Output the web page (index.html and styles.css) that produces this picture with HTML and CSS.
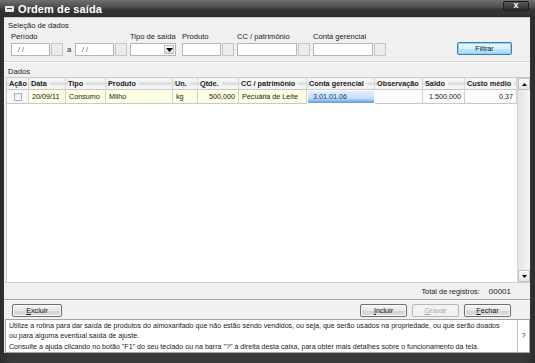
FILE: index.html
```html
<!DOCTYPE html>
<html lang="pt">
<head>
<meta charset="utf-8">
<title>Ordem de saída</title>
<link rel="stylesheet" href="styles.css">
</head>
<body>
<div class="win">
  <div class="titlebar">
    <span class="ticon"></span>
    <span class="ttext">Ordem de saída</span>
    <span class="close">x</span>
  </div>
  <div class="body">
    <div class="sec-title">Seleção de dados</div>
    <div class="filters">
      <div class="fg">
        <div class="lbl">Período</div>
        <div class="ctl">
          <div class="inp w39">/ /</div><div class="sbtn"></div>
          <span class="a">a</span>
          <div class="inp w39">/ /</div><div class="sbtn"></div>
        </div>
      </div>
      <div class="fg">
        <div class="lbl">Tipo de saída</div>
        <div class="ctl">
          <div class="inp sel"><span class="arrow"><svg width="7" height="4" viewBox="0 0 7 4"><path d="M0 0h7L3.5 4z" fill="#000"/></svg></span></div>
        </div>
      </div>
      <div class="fg">
        <div class="lbl">Produto</div>
        <div class="ctl"><div class="inp w39"></div><div class="sbtn"></div></div>
      </div>
      <div class="fg">
        <div class="lbl">CC / patrimônio</div>
        <div class="ctl"><div class="inp w60"></div><div class="sbtn"></div></div>
      </div>
      <div class="fg">
        <div class="lbl">Conta gerencial</div>
        <div class="ctl"><div class="inp w60"></div><div class="sbtn"></div></div>
      </div>
      <button class="btn filtrar">Filtrar</button>
    </div>
    <div class="sec-title dados">Dados</div>
    <div class="grid">
      <div class="table">
        <div class="th"><span>Ação</span></div>
        <div class="th"><span>Data</span></div>
        <div class="th"><span>Tipo</span></div>
        <div class="th"><span>Produto</span></div>
        <div class="th"><span>Un.</span></div>
        <div class="th"><span>Qtde.</span></div>
        <div class="th"><span>CC / patrimônio</span></div>
        <div class="th"><span>Conta gerencial</span></div>
        <div class="th"><span>Observação</span></div>
        <div class="th"><span>Saldo</span></div>
        <div class="th"><span>Custo médio</span></div>

        <div class="td act"><span class="chk"></span></div>
        <div class="td y">20/09/11</div>
        <div class="td y">Consumo</div>
        <div class="td y">Milho</div>
        <div class="td y">kg</div>
        <div class="td y r">500,000</div>
        <div class="td y">Pecuária de Leite</div>
        <div class="td sel-cell">3.01.01.06</div>
        <div class="td w"></div>
        <div class="td w r">1.500,000</div>
        <div class="td w r">0,37</div>
      </div>
      <div class="vscroll">
        <div class="sb-btn"><svg width="5" height="3" viewBox="0 0 5 3"><path d="M0 3h5L2.5 0z" fill="#000"/></svg></div>
        <div class="sb-track"></div>
        <div class="sb-btn"><svg width="5" height="3" viewBox="0 0 5 3"><path d="M0 0h5L2.5 3z" fill="#000"/></svg></div>
      </div>
    </div>
    <div class="status"><span>Total de registros:</span><span>00001</span></div>
    <div class="actions">
      <button class="btn"><u>E</u>xcluir</button>
      <div class="spacer"></div>
      <button class="btn"><u>I</u>ncluir</button>
      <button class="btn dis"><u>G</u>ravar</button>
      <button class="btn"><u>F</u>echar</button>
    </div>
    <div class="help">
      <div class="htext">
        <div>Utilize a rotina para dar saída de produtos do almoxarifado que não estão sendo vendidos, ou seja, que serão usados na propriedade, ou que serão doados</div>
        <div>ou para alguma eventual saída de ajuste.</div>
        <div>Consulte a ajuda clicando no botão "F1" do seu teclado ou na barra "?" à direita desta caixa, para obter mais detalhes sobre o funcionamento da tela.</div>
      </div>
      <div class="hq">?</div>
    </div>
  </div>
</div>
</body>
</html>
```

FILE: styles.css
```css
* { box-sizing: border-box; }
html, body { margin: 0; padding: 0; }
body {
  width: 535px;
  height: 363px;
  font-family: "Liberation Sans", Arial, sans-serif;
  font-size: 7.2px;
  color: #1a1a1a;
  overflow: hidden;
}
.win {
  width: 535px;
  height: 363px;
  background: linear-gradient(to right, #2c2c2c, #3a3a3a 2%, #3a3a3a 98%, #2c2c2c);
  display: flex;
  flex-direction: column;
  padding: 0 5px 10px 4px;
}
.titlebar {
  height: 17px;
  flex: none;
  margin: 0 -5px 0 -4px;
  padding: 0 6px 0 5px;
  background: linear-gradient(to bottom, #707070, #4a4a4a 45%, #353535 55%, #2e2e2e);
  display: flex;
  align-items: center;
  position: relative;
}
.ticon {
  width: 9px;
  height: 6px;
  background: #e8e8e8;
  border-radius: 1px;
  margin-right: 4px;
  position: relative;
}
.ticon::after {
  content: "";
  position: absolute;
  left: 2px; right: 2px; top: 2px; height: 1px;
  background: #444;
}
.ttext {
  color: #fff;
  font-weight: bold;
  font-size: 11px;
  letter-spacing: 0.1px;
}
.close {
  margin-left: auto;
  align-self: flex-start;
  margin-top: 1px;
  width: 26px;
  height: 10px;
  background: linear-gradient(to bottom, #5a5a5a, #2a2a2a);
  border: 1px solid #1c1c1c;
  border-radius: 2px;
  color: #fff;
  font-weight: bold;
  font-size: 9px;
  line-height: 7px;
  text-align: center;
}
.body {
  flex: 1;
  min-height: 0;
  background: #f0f0f0;
  border-top: 1px solid #c8c8c8;
  display: flex;
  flex-direction: column;
}
.body > * { flex: none; }
.sec-title {
  height: 14px;
  padding: 3px 0 0 4px;
  font-size: 7.6px;
  color: #222;
}
.filters {
  display: flex;
  align-items: flex-end;
  padding: 1px 18px 5px 7px;
  height: 30px;
  border-bottom: 1px solid #d4d4d4;
  box-shadow: 0 1px 0 #fff;
}
.fg { display: flex; flex-direction: column; margin-right: 3px; }
.fg:nth-child(2) { margin-right: 6px; }
.lbl { height: 11px; font-size: 7.6px; color: #222; }
.ctl { display: flex; align-items: center; height: 13px; }
.inp {
  height: 13px;
  background: #fff;
  border: 1px solid #b4b4b4;
  color: #444;
  font-size: 7px;
  line-height: 11px;
  padding-left: 6px;
}
.w39 { width: 39px; }
.w60 { width: 60px; }
.sbtn {
  width: 12px;
  height: 13px;
  margin-left: 1px;
  background: #ececec;
  border: 1px solid #c4c4c4;
}
.a { width: 12px; text-align: center; font-size: 7.6px; }
.sel {
  width: 46px;
  position: relative;
  padding: 0;
}
.arrow {
  position: absolute;
  right: 1px; top: 1px;
  width: 10px; height: 9px;
  background: linear-gradient(#fafafa, #dcdcdc);
  border: 1px solid #bdbdbd;
  display: flex; align-items: center; justify-content: center;
}
.btn {
  font-family: "Liberation Sans", Arial, sans-serif;
  font-size: 7.2px;
  color: #111;
  width: 47px;
  height: 13px;
  padding: 0;
  background: linear-gradient(to bottom, #f6f6f6, #e6e6e6 50%, #d4d4d4 51%, #dcdcdc);
  border: 1px solid #707070;
  border-radius: 2px;
  box-shadow: inset 0 0 0 1px #fafafa;
}
.btn u { text-decoration: underline; }
.btn.filtrar {
  width: 55px;
  margin-left: auto;
  margin-bottom: 1px;
  border-color: #3c7fb1;
  background: linear-gradient(to bottom, #eaf6fd, #d9f0fc 50%, #bee6fd 51%, #a7d9f5);
  box-shadow: inset 0 0 0 1px #8fd0f5;
}
.btn.dis { color: #a8a8a8; border-color: #b8b8b8; background: #f2f2f2; box-shadow: none; }
.dados { height: 13px; padding-top: 3px; margin-top: 2px; }
.grid {
  margin-left: 2px;
  height: 205px;
  background: #fff;
  border-top: 1px solid #c9c9c9;
  border-left: 1px solid #c9c9c9;
  display: flex;
}
.table {
  display: grid;
  grid-template-columns: 22px 37px 40px 67px 25px 41px 68px 68px 48px 42px 52px;
  grid-template-rows: 12px 14px;
  align-content: start;
}
.th {
  font-weight: bold;
  font-size: 7.3px;
  color: #222;
  background: linear-gradient(to bottom, #f4f4f4 0, #f4f4f4 30%, #d6dadd 50%, #f4f4f4 72%, #f4f4f4 100%);
  border-right: 1px solid #d8d8d8;
  border-bottom: 1px solid #c8c8c8;
  padding-left: 2px;
  line-height: 11px;
  white-space: nowrap;
  overflow: hidden;
}
.th span { background: #f4f4f4; padding-right: 3px; display: inline-block; }
.th:last-child { background: #f4f4f4; }
.td {
  border-right: 1px solid #cfcfcf;
  border-bottom: 1px solid #c8c8c8;
  padding: 0 3px;
  line-height: 13px;
  font-size: 7.2px;
  white-space: nowrap;
  overflow: hidden;
}
.td.y { background: #fefee3; }
.td.w { background: #fcfcfc; }
.td.r { text-align: right; }
.td.act { background: #f8f8f8; display: flex; align-items: center; justify-content: center; }
.chk {
  width: 8px; height: 8px;
  border: 1px solid #9fb4c8;
  background: linear-gradient(#e6ecf2, #fafbfc);
}
.td.sel-cell {
  background: linear-gradient(to bottom, #e2effc, #c6dff8 60%, #7fb3ea 85%, #5c9ce0);
  color: #14306e;
  border: 1px solid #fff;
  padding-left: 5px;
  line-height: 11px;
}
.vscroll {
  width: 13px;
  display: flex;
  flex-direction: column;
  border-left: 1px solid #d6d6d6;
  background: #ececec;
}
.sb-btn {
  height: 12px;
  background: linear-gradient(#fbfbfb, #e4e4e4);
  border: 1px solid #c2c2c2;
  display: flex; align-items: center; justify-content: center;
}
.sb-track { flex: 1; background: linear-gradient(to right, #e4e4e4, #f4f4f4); }
.status {
  height: 18px;
  border-top: 1px solid #cfcfcf;
  display: flex;
  justify-content: flex-end;
  align-items: center;
  gap: 9px;
  padding-right: 19px;
  border-bottom: 1px solid #a8a8a8;
  font-size: 7.4px;
}
.status span:last-child { font-size: 8px; }
.actions {
  height: 19px;
  display: flex;
  align-items: center;
  gap: 5px;
  padding: 1px 19px 0 8px;
  border-top: 1px solid #fff;
}
.actions .btn:first-child { width: 50px; }
.spacer { flex: 1; }
.help {
  height: 34px;
  margin-left: 1px;
  display: flex;
  background: #fff;
  border: 1px solid #a4a4a4;
}
.htext {
  flex: 1;
  padding: 1px 0 0 3px;
  line-height: 10.3px;
  font-size: 7.1px;
  color: #1a1a1a;
  white-space: nowrap;
}
.hq {
  width: 12px;
  border-left: 1px solid #bcbcbc;
  text-align: center;
  line-height: 32px;
  font-size: 7.5px;
  color: #333;
}
```
